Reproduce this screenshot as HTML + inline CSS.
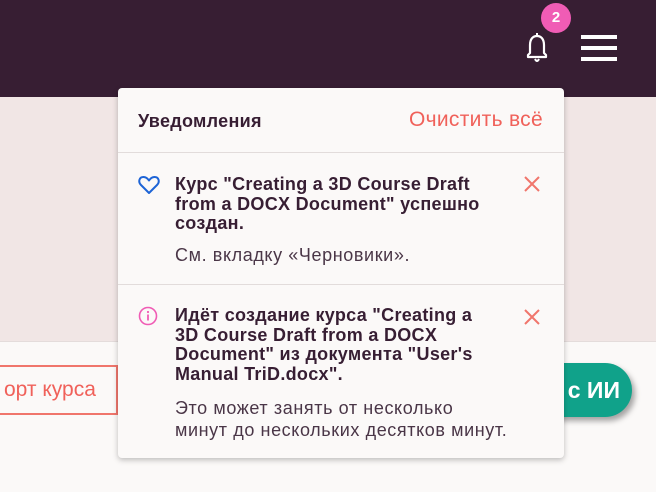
<!DOCTYPE html>
<html><head><meta charset="utf-8"><style>
*{margin:0;padding:0;box-sizing:border-box}
body{width:656px;height:492px;overflow:hidden;position:relative;background:#fbf9f8;font-family:"Liberation Sans",sans-serif;}
.hdr{position:absolute;left:0;top:0;width:656px;height:97px;background:#371e33}
.band{position:absolute;left:0;top:97px;width:656px;height:245px;background:#f1e6e5;border-bottom:1px solid #e4dcdb}
.btn1{position:absolute;left:-10px;top:365px;width:128px;height:50px;border:2px solid #f0766c;color:#f0615a;font-size:21px;line-height:46px;padding-left:12px}
.btn2{position:absolute;left:530px;top:363px;width:102px;height:54px;border-radius:27px;background:#10a28a;color:#fff;font-size:23px;font-weight:bold;line-height:54px;text-align:right;padding-right:12px;box-shadow:3px 4px 6px rgba(0,0,0,.35)}
.badge{position:absolute;left:541px;top:3px;width:30px;height:30px;border-radius:50%;background:#f05cb5;color:#fff;font-weight:bold;font-size:15px;text-align:center;line-height:30px}
.panel{position:absolute;left:118px;top:88px;width:446px;height:370px;background:#fbf9f8;border-radius:4px;box-shadow:0 2px 6px rgba(0,0,0,.25)}
.t{position:absolute;white-space:nowrap;color:#371e33}
.b{font-weight:bold;font-size:18px;line-height:19.5px;letter-spacing:.3px}
.r{font-size:18px;line-height:22px;color:#4a3647;letter-spacing:.6px}
.line{position:absolute;left:0;width:446px;height:1px;background:#e2dcdb}
</style></head><body>
<div class="hdr"></div>
<div class="band"></div>
<div class="btn1">орт курса</div>
<div class="btn2">с ИИ</div>
<svg style="position:absolute;left:520px;top:31px" width="34" height="34" viewBox="0 0 34 34"><path d="M8 26 L8 24 L10 22 L10 14 C10 8 13 5 17 5 C21 5 24 8 24 14 L24 22 L26 24 L26 26 Z" fill="none" stroke="#fff" stroke-width="2.2" stroke-linejoin="round"/><path d="M15 28 Q17 32 19 28" fill="none" stroke="#fff" stroke-width="2"/><rect x="16" y="2" width="2" height="4" fill="#fff"/></svg>
<div class="badge">2</div>
<div style="position:absolute;left:581px;top:35px;width:36px;height:4px;background:#fff"></div>
<div style="position:absolute;left:581px;top:46px;width:36px;height:4px;background:#fff"></div>
<div style="position:absolute;left:581px;top:57px;width:36px;height:4px;background:#fff"></div>
<div class="panel">
 <div class="t" style="left:20px;top:23px;font-weight:bold;font-size:18px;letter-spacing:.3px">Уведомления</div>
 <div class="t" style="left:291px;top:20px;font-size:21px;letter-spacing:.3px;color:#f0615a">Очистить всё</div>
 <div class="line" style="top:64px"></div>
 <svg style="position:absolute;left:20px;top:87px" width="22" height="20" viewBox="0 0 22 20"><path d="M11 18 L3 10 C0 7 1 2 5.5 2 C8 2 10 4 11 5.5 C12 4 14 2 16.5 2 C21 2 22 7 19 10 Z" fill="none" stroke="#1d64d6" stroke-width="2" stroke-linejoin="round"/></svg>
 <div class="t b" style="left:57px;top:87px">Курс "Creating a 3D Course Draft<br>from a DOCX Document" успешно<br>создан.</div>
 <div class="t r" style="left:57px;top:156px">См. вкладку «Черновики».</div>
 <svg style="position:absolute;left:405px;top:87px" width="18" height="18"><path d="M2 2L16 16M16 2L2 16" stroke="#f0766c" stroke-width="2"/></svg>
 <div class="line" style="top:196px"></div>
 <svg style="position:absolute;left:20px;top:218px" width="20" height="20"><circle cx="10" cy="10" r="8.5" fill="none" stroke="#f05cb5" stroke-width="1.6"/><rect x="9.1" y="8.5" width="1.8" height="6" fill="#f05cb5"/><circle cx="10" cy="6" r="1.1" fill="#f05cb5"/></svg>
 <div class="t b" style="left:57px;top:218px">Идёт создание курса "Creating a<br>3D Course Draft from a DOCX<br>Document" из документа "User's<br>Manual TriD.docx".</div>
 <div class="t r" style="left:57px;top:309px">Это может занять от несколько<br>минут до нескольких десятков минут.</div>
 <svg style="position:absolute;left:405px;top:220px" width="18" height="18"><path d="M2 2L16 16M16 2L2 16" stroke="#f0766c" stroke-width="2"/></svg>
</div>
</body></html>
